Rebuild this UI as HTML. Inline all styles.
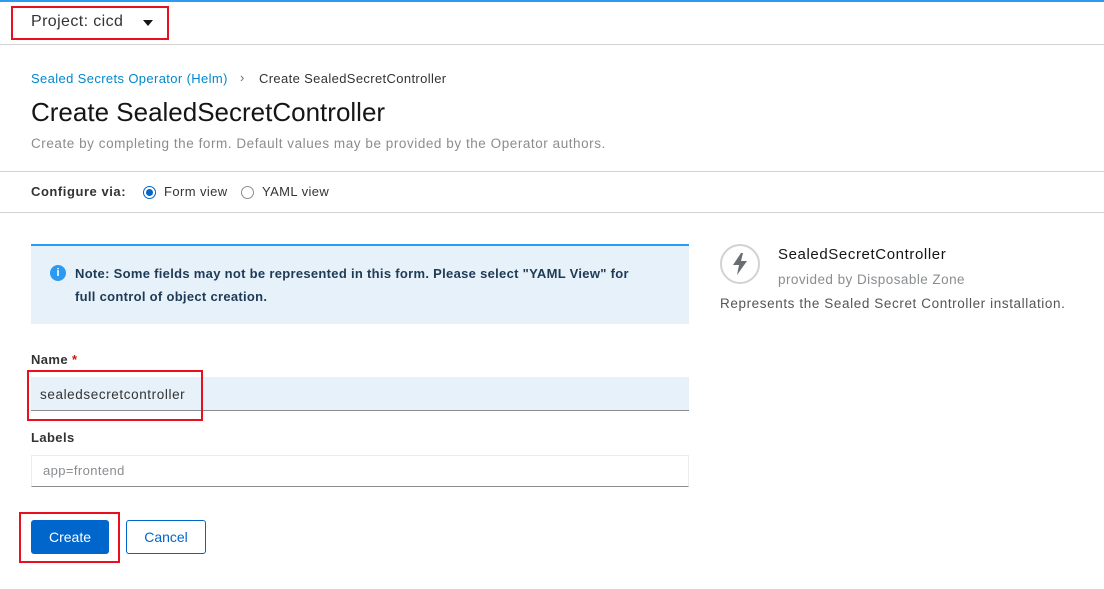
<!DOCTYPE html>
<html><head><style>
*{box-sizing:border-box;margin:0;padding:0}
body{width:1104px;height:589px;overflow:hidden;background:#fff;font-family:"Liberation Sans",sans-serif;color:#151515;position:relative}
.a{position:absolute;white-space:nowrap}
</style></head><body>
<div class="a" style="left:0;top:0;width:1104px;height:2px;background:#2b9af3"></div>
<div class="a" style="left:0;top:44px;width:1104px;height:1px;background:#d2d2d2"></div>
<div class="a" style="left:11px;top:6px;width:158px;height:34px;border:2px solid #e8101e"></div>
<div class="a" style="left:31px;top:13px;font-size:16px;color:#333;letter-spacing:0.4px">Project: cicd</div>
<div class="a" style="left:143px;top:20px;width:0;height:0;border-left:5px solid transparent;border-right:5px solid transparent;border-top:6px solid #151515"></div>
<div class="a" style="left:31px;top:71px;font-size:13px;color:#0088ce;letter-spacing:0.37px">Sealed Secrets Operator (Helm)</div>
<div class="a" style="left:240px;top:70px;font-size:13px;color:#6a6e73">›</div>
<div class="a" style="left:259px;top:71px;font-size:13px;color:#333;letter-spacing:0.36px">Create SealedSecretController</div>
<div class="a" style="left:31px;top:97px;font-size:26px;color:#151515">Create SealedSecretController</div>
<div class="a" style="left:31px;top:136px;font-size:13.5px;color:#8a8d90;letter-spacing:0.55px">Create by completing the form. Default values may be provided by the Operator authors.</div>
<div class="a" style="left:0;top:171px;width:1104px;height:1px;background:#d2d2d2"></div>
<div class="a" style="left:31px;top:184px;font-size:13px;font-weight:bold;color:#333;letter-spacing:0.55px">Configure via:</div>
<div class="a" style="left:143px;top:186px;width:13px;height:13px;border-radius:50%;border:1px solid #0066cc;background:#fff"><div style="margin:2px;width:7px;height:7px;border-radius:50%;background:#0066cc"></div></div>
<div class="a" style="left:164px;top:184px;font-size:13px;color:#333;letter-spacing:0.4px">Form view</div>
<div class="a" style="left:241px;top:186px;width:13px;height:13px;border-radius:50%;border:1px solid #8a8d90"></div>
<div class="a" style="left:262px;top:184px;font-size:13px;color:#333;letter-spacing:0.4px">YAML view</div>
<div class="a" style="left:0;top:212px;width:1104px;height:1px;background:#d2d2d2"></div>
<div class="a" style="left:31px;top:244px;width:658px;height:80px;background:#e7f1fa;border-top:2px solid #2b9af3"></div>
<div class="a" style="left:50px;top:265px;width:16px;height:16px;border-radius:50%;background:#2b9af3;color:#fff;font-size:11px;font-weight:bold;text-align:center;line-height:16px">i</div>
<div class="a" style="left:75px;top:262px;font-size:13px;font-weight:bold;color:#1e3a55;line-height:23px;letter-spacing:0.3px">Note: Some fields may not be represented in this form. Please select "YAML View" for<br>full control of object creation.</div>
<div class="a" style="left:31px;top:352px;font-size:13px;font-weight:bold;color:#333;letter-spacing:0.4px">Name <span style="color:#c9190b">*</span></div>
<div class="a" style="left:31px;top:377px;width:658px;height:34px;background:#e7f1fa;border-bottom:1px solid #8a8d90"></div>
<div class="a" style="left:40px;top:387px;font-size:13.5px;color:#333;letter-spacing:0.6px">sealedsecretcontroller</div>
<div class="a" style="left:27px;top:370px;width:176px;height:51px;border:2px solid #e8101e"></div>
<div class="a" style="left:31px;top:430px;font-size:13px;font-weight:bold;color:#333;letter-spacing:0.4px">Labels</div>
<div class="a" style="left:31px;top:455px;width:658px;height:32px;border:1px solid #ededed;border-bottom:1px solid #8a8d90"></div>
<div class="a" style="left:43px;top:463px;font-size:13px;color:#8a8d90;letter-spacing:0.4px">app=frontend</div>
<div class="a" style="left:31px;top:520px;width:78px;height:34px;background:#0066cc;border-radius:3px;color:#fff;font-size:14px;text-align:center;line-height:34px">Create</div>
<div class="a" style="left:19px;top:512px;width:101px;height:51px;border:2px solid #e8101e"></div>
<div class="a" style="left:126px;top:520px;width:80px;height:34px;border:1px solid #0066cc;border-radius:3px;color:#0066cc;font-size:14px;text-align:center;line-height:32px">Cancel</div>
<div class="a" style="left:720px;top:244px;width:40px;height:40px;border-radius:50%;border:2px solid #d2d2d2"></div>
<svg class="a" style="left:732px;top:253px" width="16" height="22" viewBox="0 0 16 22"><path d="M9 0 L1 12 H7 L5 22 L15 8 H9 L11 0 Z" fill="#6a6e73"/></svg>
<div class="a" style="left:778px;top:246px;font-size:15px;color:#151515;letter-spacing:0.6px">SealedSecretController</div>
<div class="a" style="left:778px;top:272px;font-size:13.5px;color:#8a8d90;letter-spacing:0.45px">provided by Disposable Zone</div>
<div class="a" style="left:720px;top:296px;font-size:13.5px;color:#555;letter-spacing:0.6px">Represents the Sealed Secret Controller installation.</div>
</body></html>
